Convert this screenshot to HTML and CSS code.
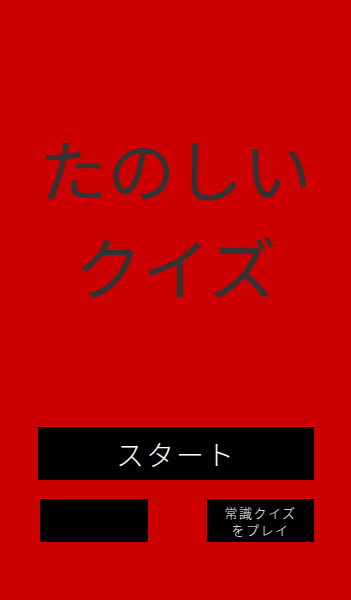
FILE: index.html
```html
<!DOCTYPE html>
<html lang="ja">
<head>
<meta charset="utf-8">
<link rel="stylesheet" href="styles.css">
</head>
<body>
<main class="screen">
  <h1 class="title">たのしい<br>クイズ</h1>
  <button class="start">スタート</button>
  <div class="row">
    <button class="small"></button>
    <button class="small">常識クイズ<br>をプレイ</button>
  </div>
</main>
</body>
</html>
```

FILE: styles.css
```css
html, body {
  margin: 0;
  padding: 0;
  background: #cc0000;
}
.screen {
  width: 351px;
  height: 600px;
  display: flex;
  flex-direction: column;
  font-family: "Noto Sans CJK JP", "Noto Sans", sans-serif;
}
.title {
  margin: 119px 0 0 0;
  height: 198px;
  font-size: 68px;
  line-height: 98px;
  font-weight: 400;
  color: #333333;
  text-align: center;
  letter-spacing: 0;
}
.start {
  margin: 110px 0 0 38px;
  width: 276px;
  height: 53px;
  background: #000;
  color: #fff;
  border: none;
  padding: 0;
  font-family: inherit;
  font-size: 28px;
  font-weight: 300;
  letter-spacing: 2px;
}
.row {
  display: flex;
  justify-content: space-between;
  margin: 19px 37px 0 40px;
}
.small {
  width: 108px;
  height: 43px;
  background: #000;
  color: #fff;
  border: none;
  padding: 0;
  font-family: inherit;
  font-size: 13px;
  line-height: 17px;
  font-weight: 300;
  letter-spacing: 1.5px;
}
.small + .small {
  width: 107px;
}
```
